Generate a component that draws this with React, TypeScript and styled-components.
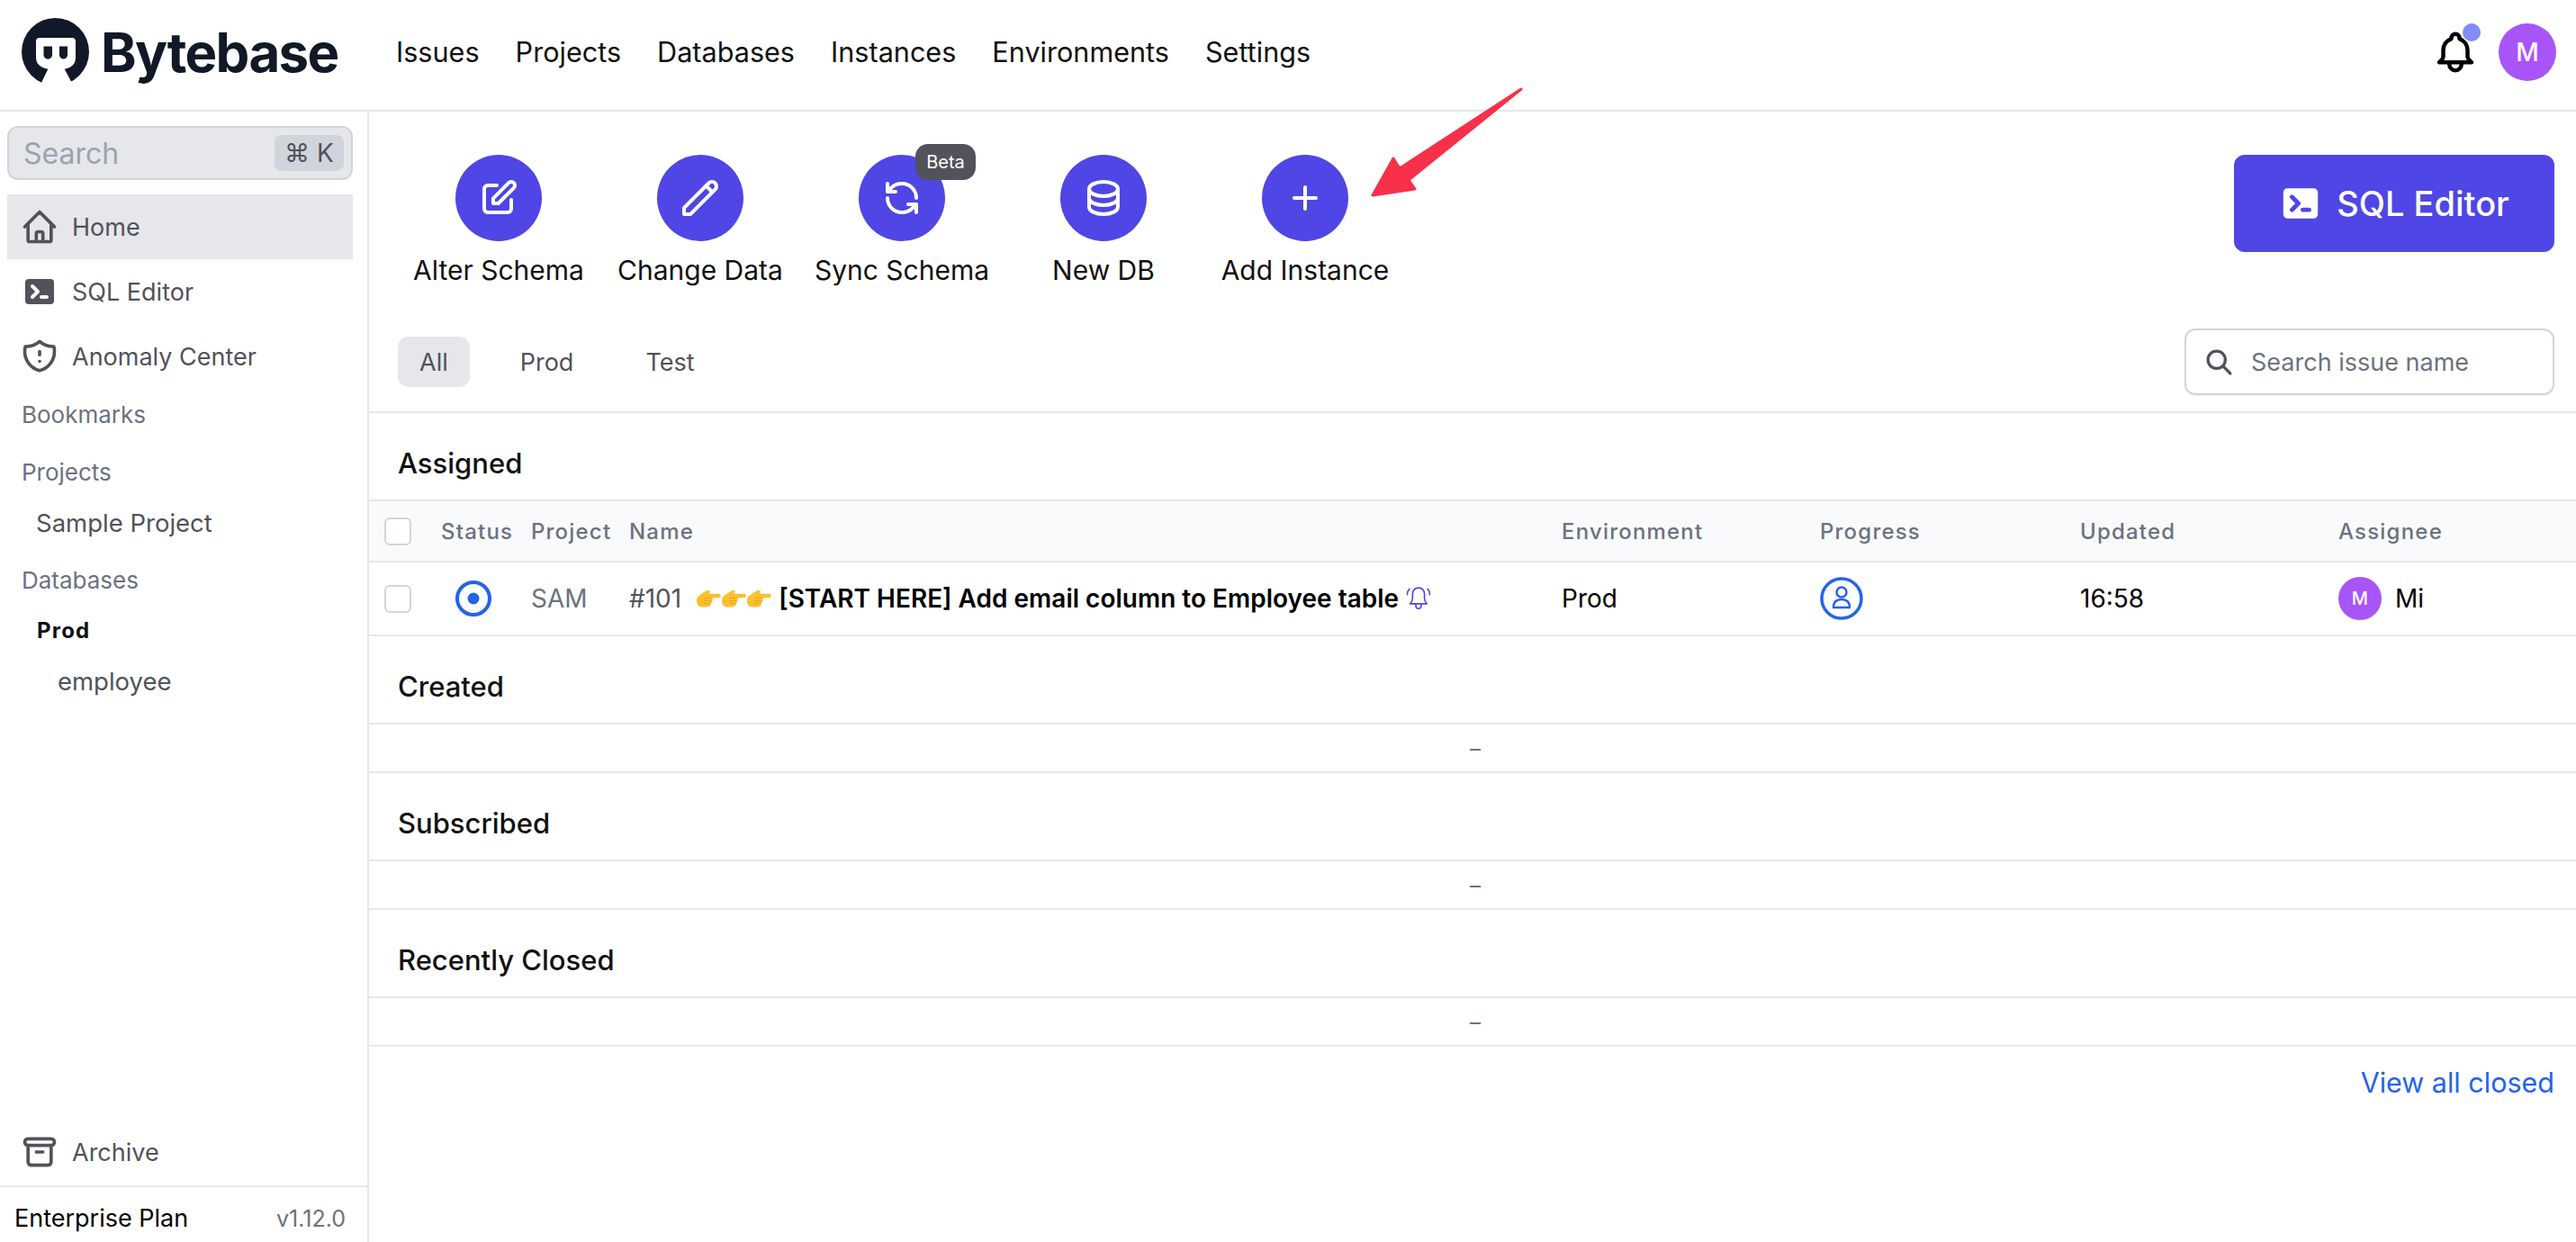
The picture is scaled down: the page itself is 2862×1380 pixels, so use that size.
import React from "react";
import styled, { createGlobalStyle } from "styled-components";

const GlobalStyle = createGlobalStyle`
  html, body {
    margin: 0;
    padding: 0;
    background: #fff;
  }
  body {
    font-family: Inter, "Liberation Sans", sans-serif;
    color: #000;
  }
  * {
    box-sizing: border-box;
  }
`;

const Page = styled.div`
  position: relative;
  width: 2862px;
  height: 1380px;
  display: flex;
  flex-direction: column;
  overflow: hidden;
`;

const Header = styled.header`
  height: 124px;
  flex: none;
  display: flex;
  align-items: center;
  padding: 0 22px 6px 24px;
  border-bottom: 2px solid #e5e7eb;
`;

const LogoMark = styled.svg`
  width: 76px;
  height: 76px;
  flex: none;
`;

const LogoText = styled.div`
  width: 264px;
  margin-left: 12px;
  font-size: 60px;
  font-weight: 700;
  letter-spacing: -1.6px;
  color: #111827;
  line-height: 76px;
  white-space: nowrap;
`;

const Nav = styled.nav`
  display: flex;
  gap: 40px;
  margin-left: 64px;
`;

const NavLink = styled.a`
  font-size: 30.6px;
  font-weight: 400;
  color: #111;
  line-height: 40px;
`;

const HeaderRight = styled.div`
  margin-left: auto;
  display: flex;
  align-items: center;
  gap: 21px;
`;

const BellWrap = styled.div`
  position: relative;
  width: 54px;
  height: 54px;
`;

const BellDot = styled.span`
  position: absolute;
  top: -5px;
  left: 35px;
  width: 20px;
  height: 20px;
  border-radius: 50%;
  background: #818cf8;
`;

const Avatar = styled.div<{ $size: number; $font: number }>`
  width: ${(p) => p.$size}px;
  height: ${(p) => p.$size}px;
  border-radius: 50%;
  flex: none;
  background: #a855f7;
  color: #fff;
  display: flex;
  align-items: center;
  justify-content: center;
  font-size: ${(p) => p.$font}px;
  font-weight: 500;
`;

const Body = styled.div`
  flex: 1;
  display: flex;
  min-height: 0;
`;

const Sidebar = styled.aside`
  width: 410px;
  flex: none;
  display: flex;
  flex-direction: column;
  border-right: 2px solid #e5e7eb;
  padding-top: 16px;
`;

const SearchBox = styled.div`
  height: 60px;
  margin: 0 16px 16px 8px;
  padding: 0 8px 0 16px;
  display: flex;
  align-items: center;
  justify-content: space-between;
  background: #e5e7eb;
  border: 2px solid #d1d5db;
  border-radius: 12px;
  font-size: 32px;
  color: #9ca3af;
`;

const Kbd = styled.span`
  width: 77px;
  height: 40px;
  border-radius: 8px;
  background: #d1d5db;
  color: #52525b;
  display: flex;
  align-items: center;
  justify-content: center;
  gap: 8px;
  font-size: 28px;
`;

const SideItem = styled.a<{ $active?: boolean }>`
  height: 72px;
  margin: 0 16px 0 8px;
  padding-left: 14px;
  display: flex;
  align-items: center;
  gap: 14px;
  font-size: 27px;
  font-weight: 400;
  color: #52525b;
  background: ${(p) => (p.$active ? "#e5e7eb" : "transparent")};
`;

const SideIcon = styled.svg`
  width: 40px;
  height: 40px;
  margin: 0 2px;
  flex: none;
`;

const SideLabel = styled.div<{ $top: number }>`
  margin: ${(p) => p.$top}px 0 0 24px;
  font-size: 26px;
  line-height: 36px;
  color: #6b7280;
`;

const SideLink = styled.a<{ $indent: number; $top: number }>`
  margin: ${(p) => p.$top}px 0 0 ${(p) => p.$indent}px;
  font-size: 27.5px;
  line-height: 36px;
  color: #52525b;
`;

const SideGroup = styled.div`
  margin: 22px 0 0 41px;
  font-size: 24px;
  line-height: 32px;
  font-weight: 700;
  letter-spacing: 1.2px;
  color: #111;
`;

const Spacer = styled.div`
  flex: 1;
`;

const PlanBar = styled.div`
  height: 63px;
  flex: none;
  margin-top: 1px;
  padding: 8px 24px 0 16px;
  display: flex;
  align-items: center;
  justify-content: space-between;
  border-top: 2px solid #e5e7eb;
`;

const PlanName = styled.span`
  font-size: 27px;
  color: #000;
`;

const Version = styled.span`
  font-size: 25px;
  color: #6b7280;
`;

const Main = styled.main`
  flex: 1;
  min-width: 0;
  display: flex;
  flex-direction: column;
`;

const TopRow = styled.div`
  display: flex;
  justify-content: space-between;
  align-items: flex-start;
  padding: 48px 24px 0 32px;
`;

const Actions = styled.div`
  display: flex;
`;

const Action = styled.div`
  position: relative;
  width: 224px;
  display: flex;
  flex-direction: column;
  align-items: center;
  gap: 12px;
`;

const ActionCircle = styled.div`
  width: 96px;
  height: 96px;
  border-radius: 50%;
  background: #4f46e5;
  display: flex;
  align-items: center;
  justify-content: center;
`;

const ActionText = styled.div`
  font-size: 30px;
  line-height: 40px;
  color: #111;
  white-space: nowrap;
`;

const BetaBadge = styled.span`
  position: absolute;
  top: -12px;
  left: 127px;
  width: 67px;
  height: 40px;
  border-radius: 14px;
  background: #52525b;
  color: #fff;
  font-size: 20px;
  display: flex;
  align-items: center;
  justify-content: center;
`;

const EditorButton = styled.button`
  width: 356px;
  height: 108px;
  border: none;
  border-radius: 12px;
  background: #4f46e5;
  color: #fff;
  font-family: inherit;
  font-size: 38px;
  font-weight: 500;
  display: flex;
  align-items: center;
  justify-content: center;
  gap: 16px;
`;

const FilterRow = styled.div`
  display: flex;
  align-items: center;
  justify-content: space-between;
  padding: 45px 24px 18px 32px;
  border-bottom: 2px solid #e5e7eb;
`;

const Tabs = styled.div`
  display: flex;
  gap: 32px;
`;

const Tab = styled.div<{ $active?: boolean }>`
  height: 56px;
  padding: 0 24px;
  border-radius: 12px;
  display: flex;
  align-items: center;
  font-size: 27px;
  color: #52525b;
  background: ${(p) => (p.$active ? "#e5e7eb" : "transparent")};
`;

const IssueSearch = styled.div`
  width: 411px;
  height: 74px;
  padding-left: 20px;
  display: flex;
  align-items: center;
  gap: 19px;
  border: 2px solid #d1d5db;
  border-radius: 12px;
  box-shadow: 0 1px 2px rgba(0, 0, 0, 0.06);
  font-size: 27px;
  color: #6b7280;
`;

const SectionTitle = styled.div`
  height: 96px;
  padding: 36px 0 0 32px;
  font-size: 31px;
  line-height: 40px;
  font-weight: 500;
  color: #111;
`;

const COLUMNS = "80px 100px 109px 1036px 287px 289px 287px 1fr";

const TableHead = styled.div`
  display: grid;
  grid-template-columns: ${COLUMNS};
  align-items: center;
  height: 70px;
  background: #f9fafb;
  border-top: 2px solid #e5e7eb;
  border-bottom: 2px solid #e5e7eb;
  font-size: 24px;
  font-weight: 500;
  letter-spacing: 1.2px;
  color: #6b7280;
`;

const TableRow = styled.div`
  display: grid;
  grid-template-columns: ${COLUMNS};
  align-items: center;
  height: 82px;
  border-bottom: 2px solid #e5e7eb;
  font-size: 28px;
  color: #000;
`;

const CheckCell = styled.div`
  padding-left: 17px;
`;

const Checkbox = styled.div`
  width: 30px;
  height: 31px;
  border: 2px solid #d1d5db;
  border-radius: 6px;
  background: #fff;
`;

const StatusCell = styled.div`
  padding-left: 16px;
  display: flex;
`;

const GrayCell = styled.div`
  color: #6b7280;
`;

const NameCell = styled.div`
  display: flex;
  align-items: center;
  white-space: nowrap;
`;

const IssueNumber = styled.span`
  color: #52525b;
  margin-right: 16px;
`;

const IssueTitle = styled.span`
  margin-left: 8px;
  font-weight: 600;
`;

const AssigneeCell = styled.div`
  display: flex;
  align-items: center;
  gap: 15px;
`;

const EmptyRow = styled.div`
  height: 56px;
  border-top: 2px solid #e5e7eb;
  border-bottom: 2px solid #e5e7eb;
  display: flex;
  align-items: center;
  justify-content: center;
  padding-left: 6px;
  font-size: 24px;
  color: #6b7280;
`;

const ViewAll = styled.a`
  align-self: flex-end;
  margin: 20px 24px 0 0;
  font-size: 30.5px;
  line-height: 40px;
  color: #2563eb;
`;

const Arrow = styled.svg`
  position: absolute;
  left: 1520px;
  top: 90px;
  width: 180px;
  height: 135px;
`;

function Outline({ d, size = 48, color = "#fff", width = 2 }: { d: string; size?: number; color?: string; width?: number }) {
  return (
    <svg width={size} height={size} viewBox="0 0 24 24" fill="none" stroke={color} strokeWidth={width} strokeLinecap="round" strokeLinejoin="round">
      <path d={d} />
    </svg>
  );
}

const TERMINAL =
  "M2 5a2 2 0 012-2h12a2 2 0 012 2v10a2 2 0 01-2 2H4a2 2 0 01-2-2V5zm3.293 1.293a1 1 0 011.414 0l3 3a1 1 0 010 1.414l-3 3a1 1 0 01-1.414-1.414L7.586 10 5.293 7.707a1 1 0 010-1.414zM11 12a1 1 0 100 2h3a1 1 0 100-2h-3z";

function Hand() {
  return (
    <svg width="28" height="20" viewBox="0 0 28 20">
      <path
        d="M1 12C1 8 4 6.500 7 4.500C9 3 12 .5 14.500 1C16.500 1.500 16 3.500 14.500 4.800L26 4.800C28.300 4.800 28.300 9 26 9L18.500 9.500C19 11 18.500 13 17.500 14.500C17 17.500 15 19.500 11 19.500L6 19.500C2.500 19.500 1 15.500 1 12Z"
        fill="#fcc02f"
      />
      <path d="M9 9.500l9-.2M9 12.500l8.500 .2M9 15.500l7 .2" stroke="#e8a01c" strokeWidth="0.8" fill="none" />
    </svg>
  );
}

const ACTIONS = [
  { label: "Alter Schema", d: "M11 5H6a2 2 0 00-2 2v11a2 2 0 002 2h11a2 2 0 002-2v-5m-1.414-9.414a2 2 0 112.828 2.828L11.828 15H9v-2.828l8.586-8.586z" },
  { label: "Change Data", d: "M15.232 5.232l3.536 3.536m-2.036-5.036a2.5 2.5 0 113.536 3.536L6.5 21.036H3v-3.572L16.732 3.732z" },
  { label: "Sync Schema", beta: true, d: "M20 12a8 8 0 0 0-8-8 8.700 8.700 0 0 0-6 2.400L4 8.500M4 4v4.500h4.500M4 12a8 8 0 0 0 8 8 8.700 8.700 0 0 0 6-2.400l2-2.100M15.500 15.500H20V20" },
  { label: "New DB", d: "M4 7v10c0 2.210 3.582 4 8 4s8-1.790 8-4V7M4 7c0 2.210 3.582 4 8 4s8-1.790 8-4M4 7c0-2.210 3.582-4 8-4s8 1.790 8 4m0 5c0 2.210-3.582 4-8 4s-8-1.790-8-4" },
  { label: "Add Instance", d: "M12 6v12m6-6H6" },
];

const NAV = ["Issues", "Projects", "Databases", "Instances", "Environments", "Settings"];

function EmptySection({ title }: { title: string }) {
  return (
    <>
      <SectionTitle>{title}</SectionTitle>
      <EmptyRow>–</EmptyRow>
    </>
  );
}

export default function App() {
  return (
    <Page>
      <GlobalStyle />
      <Header>
        <LogoMark viewBox="0 0 76 76">
          <circle cx="37.500" cy="37.500" r="37.500" fill="#111827" />
          <path
            d="M16 26a4 4 0 0 1 4-4H56a4 4 0 0 1 4 4V44Q60 54 47.700 56.700L58 76H20L29.300 56.700Q16 54 16 44Z"
            fill="#fff"
          />
          <path d="M24.500 31.500h9.500V41a4.750 4.750 0 0 1-9.500 0zM42 31.500h9V41a4.500 4.500 0 0 1-9 0z" fill="#111827" />
        </LogoMark>
        <LogoText>Bytebase</LogoText>
        <Nav>
          {NAV.map((n) => (
            <NavLink key={n}>{n}</NavLink>
          ))}
        </Nav>
        <HeaderRight>
          <BellWrap>
            <Outline
              size={54}
              color="#000"
              d="M15 17h5l-1.405-1.405A2.032 2.032 0 0118 14.158V11a6.002 6.002 0 00-4-5.659V5a2 2 0 10-4 0v.341C7.670 6.165 6 8.388 6 11v3.159c0 .538-.214 1.055-.595 1.436L4 17h5m6 0v1a3 3 0 11-6 0v-1m6 0H9"
            />
            <BellDot />
          </BellWrap>
          <Avatar $size={64} $font={28}>M</Avatar>
        </HeaderRight>
      </Header>

      <Body>
        <Sidebar>
          <SearchBox>
            Search
            <Kbd>
              <span>⌘</span>
              <span>K</span>
            </Kbd>
          </SearchBox>
          <SideItem $active>
            <Outline size={44} color="#52525b" d="M3 12l2-2m0 0l7-7 7 7M5 10v10a1 1 0 001 1h3m10-11l2 2m-2-2v10a1 1 0 01-1 1h-3m-6 0a1 1 0 001-1v-4a1 1 0 011-1h2a1 1 0 011 1v4a1 1 0 001 1m-6 0h6" />
            Home
          </SideItem>
          <SideItem>
            <SideIcon viewBox="0 0 20 20" fill="#52525b">
              <path fillRule="evenodd" clipRule="evenodd" d={TERMINAL} />
            </SideIcon>
            SQL Editor
          </SideItem>
          <SideItem>
            <Outline size={44} color="#52525b" d="M20.618 5.984A11.955 11.955 0 0112 2.944a11.955 11.955 0 01-8.618 3.040A12.020 12.020 0 003 9c0 5.591 3.824 10.290 9 11.622 5.176-1.332 9-6.030 9-11.622 0-1.042-.133-2.052-.382-3.016zM12 9v2m0 4h.010" />
            Anomaly Center
          </SideItem>
          <SideLabel $top={11}>Bookmarks</SideLabel>
          <SideLabel $top={28}>Projects</SideLabel>
          <SideLink $indent={40} $top={20}>Sample Project</SideLink>
          <SideLabel $top={28}>Databases</SideLabel>
          <SideGroup>Prod</SideGroup>
          <SideLink $indent={64} $top={22}>employee</SideLink>
          <Spacer />
          <SideItem>
            <Outline size={44} color="#52525b" d="M5 8h14M5 8a2 2 0 110-4h14a2 2 0 110 4M5 8v10a2 2 0 002 2h10a2 2 0 002-2V8m-9 4h4" />
            Archive
          </SideItem>
          <PlanBar>
            <PlanName>Enterprise Plan</PlanName>
            <Version>v1.12.0</Version>
          </PlanBar>
        </Sidebar>

        <Main>
          <TopRow>
            <Actions>
              {ACTIONS.map((a) => (
                <Action key={a.label}>
                  <ActionCircle>
                    <Outline d={a.d} />
                  </ActionCircle>
                  <ActionText>{a.label}</ActionText>
                  {a.beta && <BetaBadge>Beta</BetaBadge>}
                </Action>
              ))}
            </Actions>
            <EditorButton>
              <svg width="48" height="48" viewBox="0 0 20 20" fill="#fff">
                <path fillRule="evenodd" clipRule="evenodd" d={TERMINAL} />
              </svg>
              SQL Editor
            </EditorButton>
          </TopRow>

          <FilterRow>
            <Tabs>
              <Tab $active>All</Tab>
              <Tab>Prod</Tab>
              <Tab>Test</Tab>
            </Tabs>
            <IssueSearch>
              <Outline size={33} color="#52525b" width={2.4} d="M21 21l-6-6m2-5a7 7 0 11-14 0 7 7 0 0114 0z" />
              Search issue name
            </IssueSearch>
          </FilterRow>

          <SectionTitle>Assigned</SectionTitle>
          <TableHead>
            <CheckCell>
              <Checkbox />
            </CheckCell>
            <div>Status</div>
            <div>Project</div>
            <div>Name</div>
            <div>Environment</div>
            <div>Progress</div>
            <div>Updated</div>
            <div>Assignee</div>
          </TableHead>
          <TableRow>
            <CheckCell>
              <Checkbox />
            </CheckCell>
            <StatusCell>
              <svg width="40" height="40" viewBox="0 0 40 40">
                <circle cx="20" cy="20" r="18" fill="none" stroke="#2563eb" strokeWidth="4" />
                <circle cx="20" cy="20" r="6.500" fill="#2563eb" />
              </svg>
            </StatusCell>
            <GrayCell>SAM</GrayCell>
            <NameCell>
              <IssueNumber>#101</IssueNumber>
              <Hand />
              <Hand />
              <Hand />
              <IssueTitle>[START HERE] Add email column to Employee table</IssueTitle>
              <svg width="30" height="30" viewBox="0 0 24 24" fill="none" stroke="#4f46e5" strokeWidth="1.300" strokeLinecap="round" strokeLinejoin="round" style={{ marginLeft: 7 }}>
                <path d="M12 2.500c-3.300 0-5.300 2.500-5.300 5.500v4c0 2-1 3.500-2.200 4.700h15c-1.200-1.200-2.200-2.700-2.200-4.700V8c0-3-2-5.500-5.300-5.500zM9.500 16.700c0 2.800 1 4.300 2.500 4.300s2.500-1.500 2.500-4.300M4 3.500C2.500 5 2 6.500 2 8.500M20 3.500c1.500 1.500 2 3 2 5" />
              </svg>
            </NameCell>
            <div>Prod</div>
            <div>
              <svg width="48" height="48" viewBox="0 0 48 48" fill="none" stroke="#2563eb" style={{ display: "block" }}>
                <circle cx="24" cy="24" r="22" strokeWidth="3.500" />
                <circle cx="24" cy="17" r="5.500" strokeWidth="2.500" />
                <path d="M15 34c0-6 3.500-9 9-9s9 3 9 9z" strokeWidth="2.500" strokeLinejoin="round" />
              </svg>
            </div>
            <div>16:58</div>
            <AssigneeCell>
              <Avatar $size={48} $font={20}>M</Avatar>
              Mi
            </AssigneeCell>
          </TableRow>

          <EmptySection title="Created" />
          <EmptySection title="Subscribed" />
          <EmptySection title="Recently Closed" />
          <ViewAll>View all closed</ViewAll>
        </Main>
      </Body>

      <Arrow viewBox="0 0 180 135">
        <path
          d="M170 9L35 97L28 86L5 127L52 120L45 110Z"
          fill="#f8304a"
          stroke="#f8304a"
          strokeWidth="3"
          strokeLinejoin="round"
        />
      </Arrow>
    </Page>
  );
}
